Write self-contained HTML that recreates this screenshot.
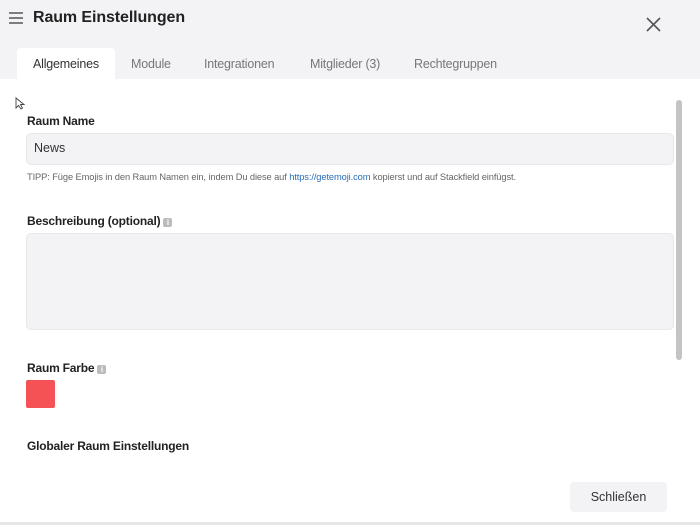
<!DOCTYPE html>
<html><head><meta charset="utf-8"><style>
*{margin:0;padding:0;box-sizing:border-box}
body{width:700px;height:525px;overflow:hidden;background:#fff;font-family:"Liberation Sans",sans-serif;color:#222;position:relative}
.hdr{position:absolute;left:0;top:0;width:700px;height:79px;background:#f3f3f5}
.abs{position:absolute;white-space:nowrap}
.tab{position:absolute;top:57px;font-size:12.5px;color:#777;letter-spacing:-0.2px}
.lbl{position:absolute;left:27px;font-size:12px;font-weight:bold;color:#222;letter-spacing:-0.2px}
.info{display:inline-block;width:9px;height:9px;background:#bbb;border-radius:2px;margin-left:3px;vertical-align:0px;color:#fff;font-size:8px;text-align:center;line-height:9px}
.box{position:absolute;left:26px;width:648px;background:#f3f3f5;border:1px solid #e8e8ea;border-radius:5px}
</style></head><body>
<div class="hdr"></div>
<svg class="abs" style="left:8px;top:11px" width="16" height="14"><path d="M1 2H15M1 7H15M1 12H15" stroke="#555" stroke-width="1.4"/></svg>
<div class="abs" style="left:33px;top:9px;font-size:16px;font-weight:bold;color:#222;letter-spacing:-0.1px">Raum Einstellungen</div>
<svg class="abs" style="left:646px;top:17px" width="15" height="15"><path d="M1 1L14 14M14 1L1 14" stroke="#555" stroke-width="1.6"/></svg>
<div class="abs" style="left:17px;top:48px;width:98px;height:31px;background:#fff;border-radius:4px 4px 0 0"></div>
<div class="tab" style="left:33px;color:#333">Allgemeines</div>
<div class="tab" style="left:131px">Module</div>
<div class="tab" style="left:204px">Integrationen</div>
<div class="tab" style="left:310px">Mitglieder (3)</div>
<div class="tab" style="left:414px">Rechtegruppen</div>
<svg class="abs" style="left:15px;top:97px" width="10" height="13"><path d="M1 1V11L3.5 8.5L6 12L7.5 11L5.5 7.5H9Z" fill="#fff" stroke="#444" stroke-width="0.9"/></svg>
<div class="lbl" style="top:114px">Raum Name</div>
<div class="box" style="top:133px;height:32px"></div>
<div class="abs" style="left:34px;top:141px;font-size:12.5px;color:#333">News</div>
<div class="abs" style="left:27px;top:172px;font-size:9.3px;color:#666;letter-spacing:-0.1px">TIPP: Füge Emojis in den Raum Namen ein, indem Du diese auf <span style="color:#2a6eb8">https://getemoji.com</span> kopierst und auf Stackfield einfügst.</div>
<div class="lbl" style="top:214px">Beschreibung (optional)<span class="info">i</span></div>
<div class="box" style="top:233px;height:97px"></div>
<div class="lbl" style="top:361px">Raum Farbe<span class="info">i</span></div>
<div class="abs" style="left:26px;top:380px;width:29px;height:28px;background:#f55256;border-radius:2px"></div>
<div class="lbl" style="top:439px">Globaler Raum Einstellungen</div>
<div class="abs" style="left:676px;top:100px;width:6px;height:260px;background:#c4c4c4;border-radius:3px"></div>
<div class="abs" style="left:570px;top:482px;width:97px;height:30px;background:#f3f3f5;border-radius:4px;font-size:12.5px;color:#333;text-align:center;line-height:30px">Schließen</div>
<div class="abs" style="left:0;top:522px;width:700px;height:3px;background:#e6e6e8"></div>
</body></html>
